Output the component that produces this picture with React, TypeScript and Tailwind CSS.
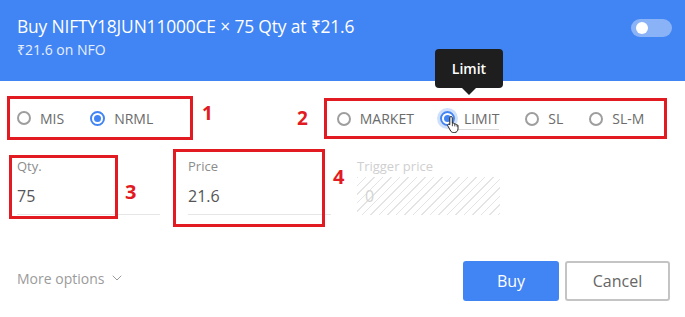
import { ChevronDown } from "lucide-react";

function Radio({ label, checked = false, focus = false }: { label: string; checked?: boolean; focus?: boolean }) {
  return (
    <div className="flex items-center gap-[9px]">
      {checked ? (
        <span
          className={`flex items-center justify-center w-[15px] h-[15px] rounded-full border-2 border-[#4184f3] ${
            focus ? "ring-[3px] ring-[#4184f3]/25" : ""
          }`}
        >
          <span className="w-[7px] h-[7px] rounded-full bg-[#4184f3]" />
        </span>
      ) : (
        <span className="w-[14px] h-[14px] rounded-full border-2 border-[#9e9e9e]" />
      )}
      <span className="text-[14px] text-[#6b6b6b]">{label}</span>
    </div>
  );
}

function Mark({ n, className }: { n: string; className?: string }) {
  return <span className={`text-[19px] font-bold text-[#e21b23] leading-none ${className ?? ""}`}>{n}</span>;
}

function HandCursor() {
  return (
    <svg width="16" height="18" viewBox="0 0 16 18" className="absolute left-[6px] top-[7px]">
      <path
        d="M5 1.5c.8 0 1.3.6 1.3 1.3V8l.6-.1c.6-.1 1.1.2 1.3.7l.1.3.5-.1c.6-.1 1.1.2 1.3.7l.1.3.4-.1c.8-.1 1.4.5 1.4 1.2v3c0 1.8-1.3 3.6-3.3 3.6H7.3c-1.2 0-2-.6-2.6-1.5L1.8 10.9c-.4-.6-.2-1.3.4-1.6.5-.3 1.1-.1 1.5.3l.1.1V2.8C3.8 2.1 4.3 1.5 5 1.5z"
        fill="#fff"
        stroke="#222"
        strokeWidth="1"
        strokeLinejoin="round"
      />
      <path d="M6.4 8v3.2M8.8 8.9v2.5M11.1 9.9v1.9" stroke="#222" strokeWidth="0.8" />
    </svg>
  );
}

export default function App() {
  return (
    <div className="relative w-[685px] h-[317px] overflow-hidden bg-white font-['Open_Sans',sans-serif]">
      {/* header */}
      <div className="h-[81px] bg-[#4184f3] px-[17px] pt-[15px] flex justify-between">
        <div className="text-white">
          <div className="text-[17.4px] leading-[22px] tracking-[-0.15px]">
            Buy NIFTY18JUN11000CE × 75 Qty at ₹21.6
          </div>
          <div className="text-[14px] leading-[20px] mt-[3px] text-[#e6efff]">₹21.6 on NFO</div>
        </div>
        <div className="mt-[4px] mr-[-4px] w-[41px] h-[18px] rounded-full bg-[#8ab2f7] flex items-center pl-[5px]">
          <span className="w-[12px] h-[12px] rounded-full bg-white" />
        </div>
      </div>

      {/* tooltip */}
      <div className="absolute left-[435px] top-[49px] flex flex-col items-center">
        <div className="w-[68px] h-[39px] rounded-[4px] bg-[#1e1e1e] flex items-center justify-center text-white text-[14px] font-semibold">
          Limit
        </div>
        <div className="w-0 h-0 border-x-[7px] border-x-transparent border-t-[7px] border-t-[#1e1e1e]" />
      </div>

      {/* product + order type */}
      <div className="flex items-start mt-[15px] pl-[7px]">
        <div className="w-[186px] h-[44px] border-[3px] border-[#e21b23] flex items-center gap-[26px] pl-[7px]">
          <Radio label="MIS" />
          <Radio label="NRML" checked />
        </div>
        <Mark n="1" className="ml-[9px] mt-[8px]" />
        <Mark n="2" className="ml-[84px] mt-[13px]" />
        <div className="ml-[16px] mt-[2px] w-[343px] h-[41px] border-[3px] border-[#e21b23] flex items-center gap-[26px] pl-[10px]">
          <Radio label="MARKET" />
          <div className="relative">
            <Radio label="LIMIT" checked focus />
            <div className="absolute left-[17px] right-0 top-[21px] h-px bg-[#d9d9d9]" />
            <HandCursor />
          </div>
          <Radio label="SL" />
          <Radio label="SL-M" />
        </div>
      </div>

      {/* fields */}
      <div className="flex items-start mt-[18px] pl-[17px]">
        <div className="relative w-[143px]">
          <div className="text-[13px] leading-[16px] text-[#8c8c8c]">Qty.</div>
          <div className="h-[38px] mt-[3px] flex items-center text-[16px] text-[#555] border-b border-[#e6e6e6]">75</div>
          <div className="absolute left-[-8px] top-[-3px] w-[109px] h-[64px] border-[3px] border-[#e21b23]" />
          <Mark n="3" className="absolute left-[108px] top-[24px] text-[20px]" />
        </div>
        <div className="relative w-[143px] ml-[28px]">
          <div className="text-[13px] leading-[16px] text-[#8c8c8c]">Price</div>
          <div className="h-[38px] mt-[3px] flex items-center text-[16px] text-[#555] border-b border-[#e6e6e6]">21.6</div>
          <div className="absolute left-[-15px] top-[-9px] w-[152px] h-[78px] border-[3px] border-[#e21b23]" />
          <Mark n="4" className="absolute left-[145px] top-[9px] text-[20px]" />
        </div>
        <div className="w-[143px] ml-[26px]">
          <div className="text-[13px] leading-[16px] text-[#cfcfcf]">Trigger price</div>
          <div className="h-[38px] mt-[3px] flex items-center pl-[8px] text-[16px] text-[#d4d4d4] bg-[repeating-linear-gradient(135deg,#e4e4e4_0,#e4e4e4_1px,transparent_1px,transparent_6px)]">
            0
          </div>
        </div>
      </div>

      {/* footer */}
      <div className="flex items-center justify-between mt-[46px] pl-[17px] pr-[15px]">
        <div className="flex items-center gap-[5px] text-[14px] text-[#9b9b9b] -mt-[6px]">
          More options
          <ChevronDown size={16} strokeWidth={1.5} />
        </div>
        <div className="flex gap-[6px]">
          <button className="w-[96px] h-[40px] rounded-[3px] bg-[#4184f3] text-white text-[16px]">Buy</button>
          <button className="w-[105px] h-[40px] rounded-[3px] border-2 border-[#c4c4c4] bg-white text-[#666] text-[16px]">
            Cancel
          </button>
        </div>
      </div>
    </div>
  );
}
